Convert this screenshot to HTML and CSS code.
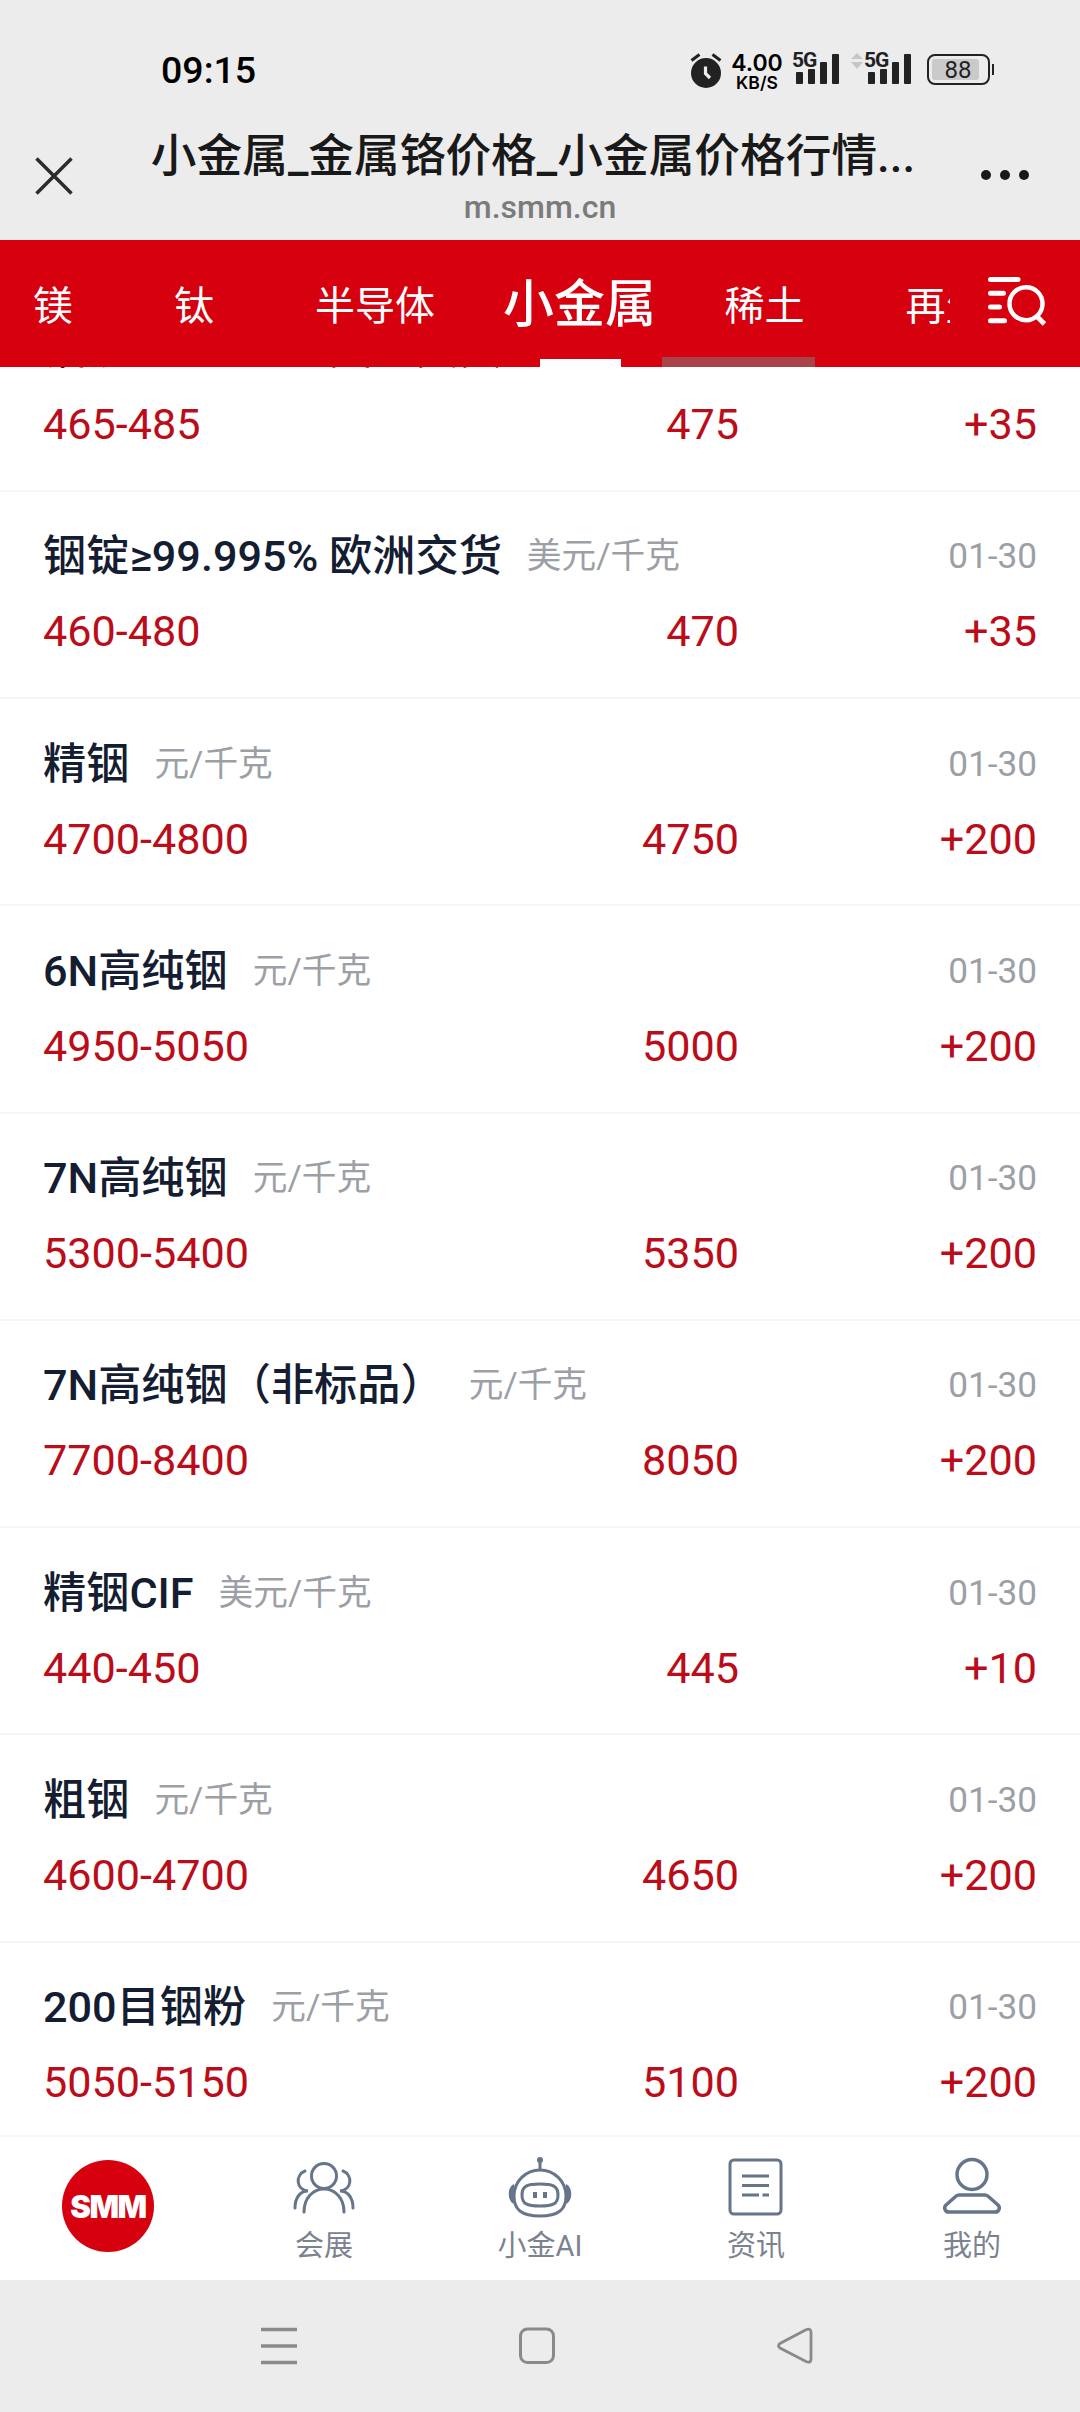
FILE: index.html
```html
<!DOCTYPE html>
<html lang="zh-CN">
<head>
    <meta charset="UTF-8">
    <meta name="viewport" content="width=device-width, initial-scale=1.0">
    <title>小金属_金属铬价格_小金属价格行情</title>
    <link rel="stylesheet" href="styles.css">
</head>
<body>
    <div class="status-bar">
        <span class="time">09:15</span>
        <div class="status-icons">
            <svg class="alarm" width="32" height="36" viewBox="0 0 32 36">
                <circle cx="16" cy="21" r="15" fill="#222"/>
                <path d="M1.500 8.500L9.500 2.500M30.500 8.500L22.500 2.500" stroke="#222" stroke-width="3"/>
                <path d="M15.500 14.500V21.500L20 26" fill="none" stroke="#ececec" stroke-width="3.200"/>
            </svg>
            <div class="speed"><b>4.00</b><span>KB/S</span></div>
            <div class="signal">
                <span class="net">5G</span>
                <svg width="44" height="32" viewBox="0 0 44 32" fill="#222">
                    <rect x="0" y="20" width="7" height="12" rx="1"/><rect x="12" y="17" width="7" height="15" rx="1"/>
                    <rect x="24" y="10" width="7" height="22" rx="1"/><rect x="36" y="2" width="7" height="30" rx="1"/>
                </svg>
            </div>
            <svg class="arrows" width="12" height="16" viewBox="0 0 12 16" fill="#c6c6c6"><path d="M6 0L12 6H0zM6 16L12 9H0z"/></svg>
            <div class="signal">
                <span class="net">5G</span>
                <svg width="44" height="32" viewBox="0 0 44 32" fill="#222">
                    <rect x="0" y="20" width="7" height="12" rx="1"/><rect x="12" y="17" width="7" height="15" rx="1"/>
                    <rect x="24" y="10" width="7" height="22" rx="1"/><rect x="36" y="2" width="7" height="30" rx="1"/>
                </svg>
            </div>
            <div class="battery"><span>88</span></div>
        </div>
    </div>

    <div class="title-bar">
        <svg class="close" width="38" height="38" viewBox="0 0 38 38"><path d="M1.500 1.500L36.500 36.500M36.500 1.500L1.500 36.500" stroke="#2b2b2b" stroke-width="3.500"/></svg>
        <div class="page-title">
            <h1>小金属_金属铬价格_小金属价格行情...</h1>
            <p>m.smm.cn</p>
        </div>
        <svg class="more" width="50" height="12" viewBox="0 0 50 12" fill="#191919"><circle cx="6" cy="6" r="5"/><circle cx="25" cy="6" r="5"/><circle cx="44" cy="6" r="5"/></svg>
    </div>

    <nav class="tabs">
        <div class="tab-list">
            <a>镁</a>
            <a>钛</a>
            <a>半导体</a>
            <a class="active">小金属</a>
            <a>稀土</a>
            <a>再生</a>
        </div>
        <span class="scroll-thumb"></span>
        <svg class="search" width="62" height="52" viewBox="0 0 62 52" fill="none" stroke="#fff" stroke-width="5" stroke-linecap="round">
            <path d="M4.500 4.500H32M4.500 18.300H17.500M4.500 32H13.500M4.500 45.800H18.500"/>
            <circle cx="40" cy="28.700" r="16.500" stroke-width="4.500"/>
            <path d="M50.500 41L58.500 49" stroke-linecap="butt"/>
        </svg>
    </nav>

    <main class="price-list">
        <div class="row">
            <div class="head"><h2>铟锭≥99.995% 美金交货</h2></div>
            <div class="values"><span>465-485</span><span>475</span><span>+35</span></div>
        </div>
        <div class="row">
            <div class="head"><h2>铟锭≥99.995% 欧洲交货</h2><span class="unit">美元/千克</span><time>01-30</time></div>
            <div class="values"><span>460-480</span><span>470</span><span>+35</span></div>
        </div>
        <div class="row">
            <div class="head"><h2>精铟</h2><span class="unit">元/千克</span><time>01-30</time></div>
            <div class="values"><span>4700-4800</span><span>4750</span><span>+200</span></div>
        </div>
        <div class="row">
            <div class="head"><h2>6N高纯铟</h2><span class="unit">元/千克</span><time>01-30</time></div>
            <div class="values"><span>4950-5050</span><span>5000</span><span>+200</span></div>
        </div>
        <div class="row">
            <div class="head"><h2>7N高纯铟</h2><span class="unit">元/千克</span><time>01-30</time></div>
            <div class="values"><span>5300-5400</span><span>5350</span><span>+200</span></div>
        </div>
        <div class="row">
            <div class="head"><h2>7N高纯铟（非标品）</h2><span class="unit">元/千克</span><time>01-30</time></div>
            <div class="values"><span>7700-8400</span><span>8050</span><span>+200</span></div>
        </div>
        <div class="row">
            <div class="head"><h2>精铟CIF</h2><span class="unit">美元/千克</span><time>01-30</time></div>
            <div class="values"><span>440-450</span><span>445</span><span>+10</span></div>
        </div>
        <div class="row">
            <div class="head"><h2>粗铟</h2><span class="unit">元/千克</span><time>01-30</time></div>
            <div class="values"><span>4600-4700</span><span>4650</span><span>+200</span></div>
        </div>
        <div class="row">
            <div class="head"><h2>200目铟粉</h2><span class="unit">元/千克</span><time>01-30</time></div>
            <div class="values"><span>5050-5150</span><span>5100</span><span>+200</span></div>
        </div>
    </main>

    <footer class="bottom-nav">
        <a class="logo"><span>SMM</span></a>
        <a>
            <svg width="64" height="64" viewBox="0 0 64 64" fill="none" stroke="#66758a" stroke-width="3" stroke-linecap="round">
                <circle cx="32" cy="20" r="12.500"/>
                <path d="M12 56C12 42 21 33 32 33S52 42 52 56"/>
                <path d="M13 15C3 19 4 34 16 35C8 35 3 42 3 52M51 15C61 19 60 34 48 35C56 35 61 42 61 52"/>
            </svg>
            <span>会展</span>
        </a>
        <a>
            <svg width="64" height="64" viewBox="0 0 64 64" fill="none" stroke="#66758a" stroke-width="3">
                <path d="M32 5V13"/><circle cx="32" cy="4" r="3" fill="#66758a" stroke="none"/>
                <path d="M32 14C46 14 58 25 58 40C58 54 50 60 32 60S6 54 6 40C6 25 18 14 32 14z"/>
                <path d="M6 28C-1 31 -1 45 6 48zM58 28C65 31 65 45 58 48z" fill="#66758a" stroke="none"/>
                <path d="M32 28C45 28 50 30 50 39S45 50 32 50S14 48 14 39S19 28 32 28z"/>
                <path d="M27 36V42M37 36V42" stroke-width="4"/>
            </svg>
            <span>小金AI</span>
        </a>
        <a>
            <svg width="64" height="64" viewBox="0 0 64 64" fill="none" stroke="#66758a" stroke-width="3">
                <rect x="6" y="4" width="51" height="54" rx="4"/>
                <path d="M18 20H45M18 29.500H45M18 39H35M38.500 39H45"/>
            </svg>
            <span>资讯</span>
        </a>
        <a>
            <svg width="64" height="64" viewBox="0 0 64 64" fill="none" stroke="#66758a" stroke-width="3.500" stroke-linejoin="round">
                <circle cx="32" cy="18.500" r="15"/>
                <path d="M19 39H45Q47 39 49 41L58 49Q60 51 59 53.500Q58 56 55 56H9Q6 56 5 53.500Q4 51 6 49L15 41Q17 39 19 39z"/>
            </svg>
            <span>我的</span>
        </a>
    </footer>

    <div class="system-nav">
        <svg width="36" height="38" viewBox="0 0 36 38" stroke="#8a8a8a" stroke-width="3.300"><path d="M0 2.500H36M0 19H36M0 35.500H36"/></svg>
        <svg width="36" height="38" viewBox="0 0 36 38" fill="none" stroke="#8a8a8a" stroke-width="3"><rect x="1.500" y="2" width="33" height="33.500" rx="7"/></svg>
        <svg width="36" height="38" viewBox="0 0 36 38" fill="none" stroke="#8a8a8a" stroke-width="2.800"><path d="M29 2.800L3 16.500Q0 18.500 3 21L29 34.500Q34 36.500 34 32V5.500Q34 .8 29 2.800z"/></svg>
    </div>
</body>
</html>
```
FILE: styles.css
```css
* {
    margin: 0;
    padding: 0;
    box-sizing: border-box;
}

body {
    width: 1080px;
    height: 2412px;
    display: flex;
    flex-direction: column;
    background: #fff;
    font-family: Roboto, 'Noto Sans CJK SC', sans-serif;
    overflow: hidden;
}

svg {
    display: block;
    flex-shrink: 0;
}

/* phone status bar */
.status-bar {
    height: 132px;
    display: flex;
    justify-content: space-between;
    padding: 0 86px 0 161px;
    background: #ececec;
}

.time {
    margin-top: 45px;
    font-size: 37.5px;
    line-height: 50px;
    font-weight: 500;
    color: #000;
}

.status-icons {
    display: flex;
    align-items: flex-start;
    padding-top: 52px;
}

.speed {
    width: 54px;
    margin-left: 8px;
    display: flex;
    flex-direction: column;
    align-items: center;
    font-family: Inter, sans-serif;
    color: #000;
    white-space: nowrap;
}

.speed b {
    font-size: 23px;
    line-height: 22px;
    font-weight: 600;
}

.speed span {
    font-size: 17.5px;
    line-height: 18px;
    font-weight: 600;
}

.signal {
    position: relative;
    margin-left: 9px;
    padding-left: 3px;
}

.net {
    position: absolute;
    left: -1px;
    top: -1px;
    font-size: 21px;
    line-height: 18px;
    font-weight: 700;
    letter-spacing: -1px;
    color: #222;
}

.arrows {
    margin: 1px 0 0 11px;
}

.arrows + .signal {
    margin-left: 2px;
}

.battery {
    position: relative;
    width: 63px;
    height: 31px;
    margin: 2px 4px 0 15px;
    padding: 3px;
    border: 2px solid #222;
    border-radius: 8px;
}

.battery::after {
    content: '';
    position: absolute;
    right: -6px;
    top: 8px;
    width: 2px;
    height: 11px;
    background: #222;
}

.battery span {
    display: block;
    width: 47px;
    height: 21px;
    padding-left: 5px;
    border-radius: 3px;
    background: #cacaca;
    font-size: 24px;
    line-height: 22px;
    text-align: center;
    color: #222;
}

/* webview title bar */
.title-bar {
    height: 108px;
    display: flex;
    flex-shrink: 0;
    padding: 0 50px 0 35px;
    background: #ececec;
}

.close {
    margin-top: 25px;
}

.more {
    margin-top: 37px;
}

.page-title {
    flex: 1;
    padding: 1px 0 0 27px;
    text-align: center;
    white-space: nowrap;
}

.page-title h1 {
    margin-left: -14px;
    font-size: 45.7px;
    line-height: 48px;
    font-weight: 500;
    color: #191919;
}

.page-title p {
    margin-top: 8px;
    font-size: 32px;
    line-height: 36px;
    font-weight: 500;
    color: #7b7b7b;
}

/* metal tabs */
.tabs {
    position: relative;
    height: 127px;
    display: flex;
    flex-shrink: 0;
    background: #d7000f;
    color: #fff;
}

.tab-list {
    width: 950px;
    height: 127px;
    display: flex;
    padding-left: 33px;
    overflow: hidden;
    font-size: 40px;
    line-height: 134px;
    white-space: nowrap;
}

.tab-list a {
    margin-right: 101px;
}

.tab-list .active {
    position: relative;
    margin: 0 68.5px 0 -33px;
    font-size: 51px;
    line-height: 129px;
    font-weight: 500;
}

.tab-list .active::after {
    content: '';
    position: absolute;
    left: 37px;
    bottom: 0;
    width: 81px;
    height: 8px;
    background: #fff;
}

.scroll-thumb {
    position: absolute;
    left: 662px;
    bottom: 0;
    width: 153px;
    height: 10px;
    background: #a84349;
}

.search {
    margin: 35px 0 0 36px;
}

/* price rows, scrolled so that the first one is cut by the tabs */
.price-list {
    height: 1768px;
    display: flex;
    flex-direction: column;
    justify-content: flex-end;
    flex-shrink: 0;
    overflow: hidden;
    background: #fff;
}

.row {
    height: 207.25px;
    flex-shrink: 0;
    padding: 36.5px 43px 0;
    border-bottom: 2px solid #f5f6fa;
}

.row:last-child {
    height: 192.5px;
    border: 0;
}

.head {
    display: flex;
    align-items: flex-start;
    height: 56px;
    line-height: 56px;
}

.head h2 {
    font-size: 43.2px;
    line-height: 58px;
    font-weight: 500;
    color: #141d31;
    white-space: nowrap;
}

.unit {
    margin-left: 25px;
    font-size: 34.7px;
    line-height: 57px;
    color: #9c9fa6;
}

.head time {
    margin-left: auto;
    font-size: 35.2px;
    color: #9c9fa6;
}

.values {
    display: grid;
    grid-template-columns: 382px 314px 1fr;
    margin-top: 20px;
    font-size: 43.2px;
    line-height: 56px;
    color: #bb0c1a;
}

.values span:nth-child(n+2) {
    text-align: right;
}

/* bottom navigation */
.bottom-nav {
    height: 145px;
    display: grid;
    grid-template-columns: repeat(5, 1fr);
    flex-shrink: 0;
    border-top: 2px solid #f7f7f7;
    background: #fff;
}

.bottom-nav a {
    display: flex;
    flex-direction: column;
    align-items: center;
    padding-top: 19px;
    font-size: 29px;
    line-height: 40px;
    color: #7c828f;
}

.bottom-nav a > span {
    margin-top: 6px;
}

.bottom-nav .logo {
    padding-top: 23px;
}

.bottom-nav .logo span {
    width: 92px;
    height: 92px;
    margin: 0;
    border-radius: 50%;
    background: #d7000f;
    font-family: Inter, sans-serif;
    font-size: 31px;
    font-weight: 900;
    line-height: 94px;
    text-align: center;
    letter-spacing: -1.5px;
    color: #fff;
}

.system-nav {
    flex: 1;
    display: flex;
    gap: 222px;
    padding: 47px 0 0 261px;
    background: #ececec;
}
```
